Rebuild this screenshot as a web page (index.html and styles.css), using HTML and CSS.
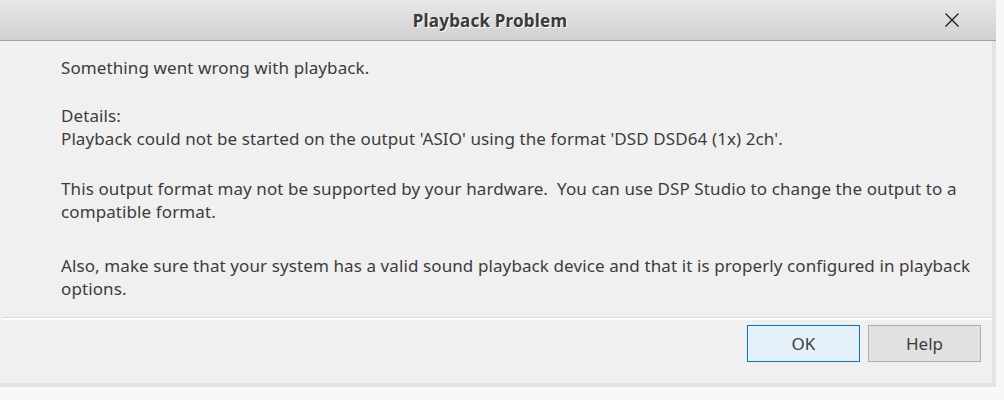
FILE: index.html
```html
<!DOCTYPE html>
<html>
<head>
<meta charset="utf-8">
<link rel="stylesheet" href="styles.css">
</head>
<body>
<div class="window">
  <div class="titlebar">
    <span class="title">Playback Problem</span>
    <button class="close" aria-label="Close">
      <svg width="16" height="16" viewBox="0 0 16 16"><path d="M1.5 1.5 L14.5 14.5 M14.5 1.5 L1.5 14.5" stroke="#1a1a1a" stroke-width="1.3" fill="none"/></svg>
    </button>
  </div>
  <div class="frame">
    <div class="body">
      <div class="message">
        <p class="p1">Something went wrong with playback.</p>
        <p class="p2">Details:<br>Playback could not be started on the output 'ASIO' using the format 'DSD DSD64 (1x) 2ch'.</p>
        <p class="p3">This output format may not be supported by your hardware.&nbsp; You can use DSP Studio to change the output to a compatible format.</p>
        <p class="p4">Also, make sure that your system has a valid sound playback device and that it is properly configured in playback options.</p>
      </div>
      <div class="separator"></div>
      <div class="buttons">
        <button class="btn btn-default">OK</button>
        <button class="btn">Help</button>
      </div>
    </div>
  </div>
</div>
</body>
</html>
```
FILE: styles.css
```css
html, body {
  margin: 0;
  padding: 0;
  background: #f8f8f8;
}
body {
  width: 1004px;
  height: 400px;
  overflow: hidden;
  font-family: "Noto Sans", "Open Sans", sans-serif;
}
.window {
  width: 996px;
}
.titlebar {
  height: 40px;
  border-bottom: 1px solid #a3a3a3;
  background: linear-gradient(#e8e8e8, #d0d0d0);
  display: flex;
  align-items: center;
  justify-content: center;
  position: relative;
}
.title {
  font-weight: bold;
  font-size: 17px;
  color: #3a3a3a;
  text-shadow: 1px 1px 0 #ffffff;
  margin-left: -16px;
  letter-spacing: 0.2px;
}
.close {
  position: absolute;
  right: 36px;
  top: 12px;
  width: 16px;
  height: 16px;
  padding: 0;
  border: 0;
  background: none;
  display: flex;
}
.frame {
  background: #e3e3e3;
  padding: 0 4px 4px 0;
}
.body {
  background: #f0f0f0;
  height: 342px;
  display: flex;
  flex-direction: column;
}
.message {
  padding: 0 10px 0 61px;
  color: #3c3c3c;
  font-size: 17px;
  line-height: 23px;
  letter-spacing: 0.1px;
}
.message p { margin: 0; }
.p1 { margin-top: 15px !important; }
.p2 { margin-top: 25px !important; }
.p3 { margin-top: 27px !important; }
.p4 { margin-top: 31px !important; }
.separator {
  margin: 17px 0 0 2px;
  height: 1px;
  background: #dcdcdc;
  border-bottom: 2px solid #ffffff;
}
.buttons {
  display: flex;
  justify-content: flex-end;
  gap: 8px;
  padding: 5px 11px 0 0;
}
.btn {
  width: 113px;
  height: 37px;
  border: 1px solid #adadad;
  background: #e1e1e1;
  color: #3c3c3c;
  font-family: "Noto Sans", "Open Sans", sans-serif;
  font-size: 17px;
  padding: 0;
}
.btn-default {
  border-color: #0078d7;
  background: #e5f1fb;
}
```
